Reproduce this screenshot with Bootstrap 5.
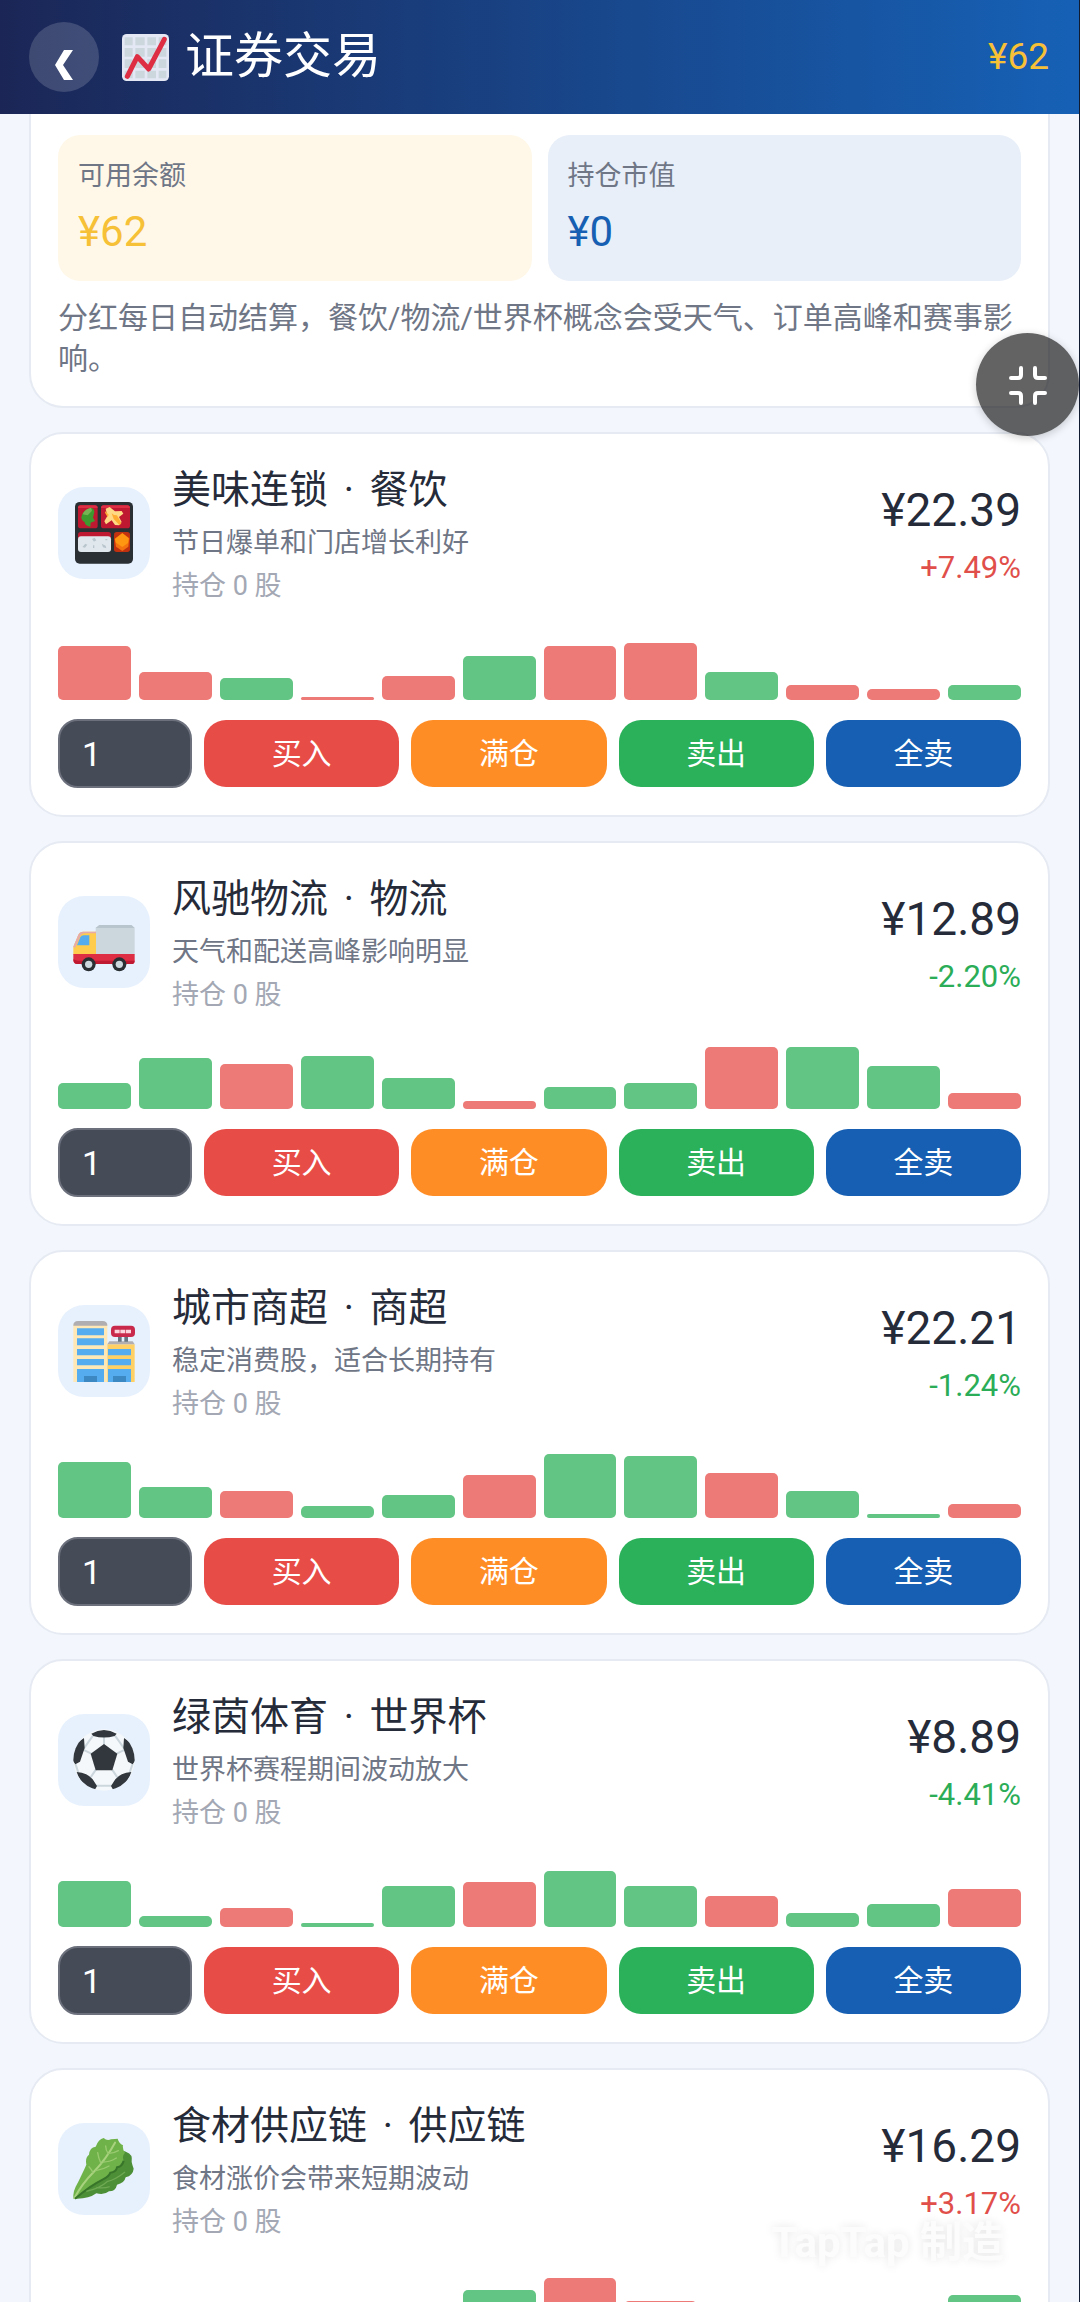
<!DOCTYPE html>
<html lang="zh-CN">

<head>
    <meta charset="UTF-8">
    <meta name="viewport" content="width=device-width, initial-scale=1.0">
    <title>证券交易</title>
    <link href="https://cdn.jsdelivr.net/npm/bootstrap@5.3.0/dist/css/bootstrap.min.css" rel="stylesheet">
    <style>
        body {
            font-family: Roboto, "Noto Sans CJK SC", sans-serif;
            background: #f3f7fd;
            color: #262b3a;
        }

        /* App shell: fixed bar on top, list scrolls under it */
        .app-shell {
            border-right: 1px solid #101a30;
        }

        .app-main {
            padding: 0 29px;
            gap: 24px;
            scrollbar-width: none;
        }

        .app-main::-webkit-scrollbar {
            display: none;
        }

        .top-bar {
            height: 114px;
            padding: 0 30px 0 29px;
            background: linear-gradient(90deg, #1b2656, #1661b6);
        }

        .back-btn {
            width: 70px;
            height: 70px;
            background: rgba(255, 255, 255, .16);
        }

        .page-title {
            font-size: 49px;
            line-height: 64px;
            margin-left: 23px;
            gap: 16px;
        }

        .top-money {
            font-size: 37px;
            color: #f6c037;
        }

        /* Cards */
        .panel {
            background: #fff;
            border: 2px solid #e6eaf2;
            border-radius: 34px;
            padding: 28px 27px 27px;
        }

        .panel-summary {
            border-top: 0;
            border-top-left-radius: 0;
            border-top-right-radius: 0;
            padding: 21px 27px 27px;
        }

        .money-row {
            gap: 16px;
        }

        .money-box {
            border-radius: 22px;
            padding: 18px 20px 16px;
        }

        .money-label {
            font-size: 27px;
            line-height: 46px;
            color: #6f7686;
        }

        .money-value {
            font-size: 42px;
            line-height: 66px;
        }

        .box-cash {
            background: #fff8e9;
            color: #f6c037;
        }

        .box-hold {
            background: #e8eff8;
            color: #165fb3;
        }

        .hint {
            font-size: 30px;
            line-height: 41px;
            margin-top: 16px;
            color: #6f7686;
        }

        /* Stock rows */
        .stock-icon {
            width: 92px;
            height: 92px;
            border-radius: 26px;
            margin-right: 22px;
            background: #e7f1fd;
        }

        .stock-name {
            font-size: 39px;
            line-height: 56px;
        }

        .name-dot {
            margin: 0 6px;
        }

        .stock-desc {
            font-size: 27px;
            line-height: 50px;
            color: #6f7686;
        }

        .stock-hold {
            font-size: 27px;
            line-height: 36px;
            color: #a3a8b4;
        }

        .stock-quote {
            padding-top: 6px;
        }

        .stock-price {
            font-size: 46px;
            line-height: 64px;
        }

        .stock-change {
            font-size: 31px;
            line-height: 52px;
        }

        .up {
            color: #e14f4b;
        }

        .down {
            color: #2bad58;
        }

        .spark {
            height: 78px;
            margin: 18px 0 19px;
            gap: 8px;
        }

        .bar {
            flex: 1 1 0;
            border-radius: 5px;
        }

        .bar-up {
            background: #ed7a77;
        }

        .bar-down {
            background: #62c583;
        }

        /* Trade controls */
        .trade-row {
            gap: 12px;
        }

        .qty {
            width: 134px;
            height: 69px;
            flex: none;
            padding: 0 22px;
            font-size: 34px;
            border: 2px solid #6b707c;
            border-radius: 20px;
            background: #464b58;
            color: #fff;
        }

        .qty:focus {
            background: #464b58;
            color: #fff;
        }

        .trade-btn {
            flex: 1 1 0;
            height: 67px;
            padding: 0;
            border: 0;
            border-radius: 22px;
            font-size: 30px;
            color: #fff;
        }

        .btn-buy {
            background: #e84c47;
        }

        .btn-full {
            background: #ff8d26;
        }

        .btn-sell {
            background: #2bb15a;
        }

        .btn-clear {
            background: #165fb3;
        }

        /* Floating shrink button */
        .shrink-btn {
            position: fixed;
            top: 333px;
            right: 1px;
            width: 103px;
            height: 103px;
            background: rgba(0, 0, 0, .61);
            box-shadow: 0 2px 8px rgba(0, 0, 0, .2);
        }

        .brand-mark {
            position: fixed;
            right: 76px;
            bottom: 38px;
            font-size: 42px;
            line-height: 42px;
            font-weight: 700;
            color: #fcfcfc;
            text-shadow: 0 0 10px rgba(0, 0, 0, .1);
        }
    </style>
    <script src="https://cdn.jsdelivr.net/npm/bootstrap@5.3.0/dist/js/bootstrap.bundle.min.js"></script>
</head>

<body>

    <div class="app-shell vh-100 d-flex flex-column overflow-hidden">

        <header class="top-bar d-flex align-items-center flex-shrink-0">
            <button type="button" class="back-btn btn border-0 rounded-circle p-0 d-flex align-items-center justify-content-center" aria-label="返回">
                <svg width="70" height="70" viewBox="0 0 70 70">
                    <path d="M35 28h9L34 43l10 15h-9L26 43z" fill="#fff" />
                </svg>
            </button>
            <h1 class="page-title d-flex align-items-center fw-normal text-white mb-0">
                <svg width="47" height="47" viewBox="0 0 141 141">
                    <rect width="141" height="141" rx="14" fill="#e3e8f4" />
                    <path d="M8 10h24v24H8zM40 10h28v24H40zM76 10h26v24H76zM110 10h23v24h-23zM8 42h24v26H8zM40 42h28v26H40zM76 42h26v26H76zM110 42h23v26h-23zM8 76h24v26H8zM40 76h28v26H40zM76 76h26v26H76zM110 76h23v26h-23zM8 110h24v23H8zM40 110h28v23H40zM76 110h26v23H76zM110 110h23v23h-23z" fill="#ccd6dd" />
                    <path d="M16 127L46 68l34 37 47-89" fill="none" stroke="#dd2e44" stroke-width="15" stroke-linecap="round" stroke-linejoin="round" />
                </svg>
                <span>证券交易</span>
            </h1>
            <span class="top-money ms-auto">¥62</span>
        </header>

        <main class="app-main d-flex flex-column flex-grow-1 overflow-auto">

            <section class="panel panel-summary flex-shrink-0">
                <div class="money-row d-flex">
                    <div class="money-box box-cash w-50">
                        <div class="money-label">可用余额</div>
                        <div class="money-value">¥62</div>
                    </div>
                    <div class="money-box box-hold w-50">
                        <div class="money-label">持仓市值</div>
                        <div class="money-value">¥0</div>
                    </div>
                </div>
                <p class="hint mb-0">分红每日自动结算，餐饮/物流/世界杯概念会受天气、订单高峰和赛事影响。</p>
            </section>

            <section class="panel flex-shrink-0">
                <div class="d-flex align-items-center">
                    <div class="stock-icon d-flex align-items-center justify-content-center">
                        <!-- Bento box -->
                        <svg width="62" height="62" viewBox="69 64 186 186">
                            <rect x="75" y="64" width="174" height="185" rx="14" fill="#292f33" />
                            <rect x="84" y="74" width="59" height="69" rx="8" fill="#be1931" />
                            <rect x="153" y="74" width="87" height="69" rx="8" fill="#be1931" />
                            <path d="M84 80q0-6 8-6h43q8 0 8 8H84zM153 82q0-8 8-8h71q8 0 8 8z" fill="#dd2e44" />
                            <path d="M94 110q2-20 30-29 9 3 9 13l-4 17 6 10-13 5-1 12q-17-3-17-14-10-4-10-14z" fill="#3e9a2f" />
                            <path d="M98 101q5-15 25-20l3 9-13 14z" fill="#77b255" />
                            <path d="M167 84l12-5 16 13 20-1 5 8-13 10 8 15-8 10-12-1-10-14-17 12-5-9 9-16z" fill="#ffd983" />
                            <path d="M185 98l7 5 9 1 13 24-5 6-18-19zM166 92l10 10-3 8-8-14z" fill="#ffac33" />
                            <path d="M84 162q0-8 8-8h83q8 0 8 8v30H84z" fill="#be1931" />
                            <rect x="84" y="167" width="99" height="47" rx="9" fill="#e1e8ed" />
                            <path d="M97 199l9-10 6 3-7 9zM126 175l8-4 5 8-7 4zM155 189l12 6 2 8-10-3zM129 194h4v8h-4zM166 175h6v4h-6z" fill="#b9c6cd" />
                            <rect x="192" y="154" width="48" height="60" rx="8" fill="#c1300f" />
                            <path d="M217 157l21 16-3 25-18 13-19-13-4-24z" fill="#f4710f" />
                            <path d="M217 158l19 15-2 14-17 12-19-13-3-11z" fill="#ff9611" />
                        </svg>
                    </div>
                    <div class="flex-grow-1">
                        <h2 class="stock-name fw-normal mb-0">美味连锁 <span class="name-dot">·</span> 餐饮</h2>
                        <div class="stock-desc">节日爆单和门店增长利好</div>
                        <div class="stock-hold">持仓 0 股</div>
                    </div>
                    <div class="stock-quote text-end">
                        <div class="stock-price">¥22.39</div>
                        <div class="stock-change up">+7.49%</div>
                    </div>
                </div>
                <div class="spark d-flex align-items-end" data-bars="54 28 -22 3 24 -44 54 57 -28 15 11 -15"></div>
                <div class="trade-row d-flex align-items-center">
                    <input type="text" inputmode="numeric" class="qty form-control" value="1" aria-label="数量">
                    <button type="button" class="trade-btn btn-buy btn">买入</button>
                    <button type="button" class="trade-btn btn-full btn">满仓</button>
                    <button type="button" class="trade-btn btn-sell btn">卖出</button>
                    <button type="button" class="trade-btn btn-clear btn">全卖</button>
                </div>
            </section>

            <section class="panel flex-shrink-0">
                <div class="d-flex align-items-center">
                    <div class="stock-icon d-flex align-items-center justify-content-center">
                        <!-- Truck -->
                        <svg width="62" height="62" viewBox="69 61 186 186">
                            <path d="M137 112l11-9h96l10 9v80H137z" fill="#ccd6dd" />
                            <path d="M148 103h96l10 9H137z" fill="#b8c5cd" />
                            <path d="M70 192v-24l15-36q4-9 15-9h38v69z" fill="#ffcc4d" />
                            <path d="M70 168l15-36q4-9 15-9h38v5h-35q-8 0-11 6l-17 38z" fill="#e6aaaa" />
                            <path d="M81 164l10-24q3-6 10-6h17v30z" fill="#55acee" />
                            <path d="M70 190h184v20q0 10-10 10H82q-12 0-12-12z" fill="#dd2e44" />
                            <path d="M70 206q0 14 12 14h162q10 0 10-10H82z" fill="#be1931" />
                            <circle cx="116" cy="221" r="21" fill="#292f33" />
                            <circle cx="208" cy="221" r="21" fill="#292f33" />
                            <circle cx="116" cy="221" r="11" fill="#ccd6dd" />
                            <circle cx="208" cy="221" r="11" fill="#ccd6dd" />
                        </svg>
                    </div>
                    <div class="flex-grow-1">
                        <h2 class="stock-name fw-normal mb-0">风驰物流 <span class="name-dot">·</span> 物流</h2>
                        <div class="stock-desc">天气和配送高峰影响明显</div>
                        <div class="stock-hold">持仓 0 股</div>
                    </div>
                    <div class="stock-quote text-end">
                        <div class="stock-price">¥12.89</div>
                        <div class="stock-change down">-2.20%</div>
                    </div>
                </div>
                <div class="spark d-flex align-items-end" data-bars="-26 -51 45 -53 -31 8 -22 -26 62 -62 -43 16"></div>
                <div class="trade-row d-flex align-items-center">
                    <input type="text" inputmode="numeric" class="qty form-control" value="1" aria-label="数量">
                    <button type="button" class="trade-btn btn-buy btn">买入</button>
                    <button type="button" class="trade-btn btn-full btn">满仓</button>
                    <button type="button" class="trade-btn btn-sell btn">卖出</button>
                    <button type="button" class="trade-btn btn-clear btn">全卖</button>
                </div>
            </section>

            <section class="panel flex-shrink-0">
                <div class="d-flex align-items-center">
                    <div class="stock-icon d-flex align-items-center justify-content-center">
                        <!-- Store building -->
                        <svg width="62" height="62" viewBox="69 59 186 186">
                            <path d="M70 72h102v174H70z" fill="#ffe8b6" />
                            <path d="M70 76q0-14 14-14h74q14 0 14 14z" fill="#b0aeb0" />
                            <path d="M81 84h81v21H81zM81 114h81v21H81zM81 146h81v19H81zM81 176h81v19H81zM81 206h81v40H81z" fill="#55acee" />
                            <path d="M102 227h39v19h-39z" fill="#3b88c3" />
                            <path d="M172 132h82v114h-82z" fill="#ffd164" />
                            <path d="M172 132l6-9h70l6 9z" fill="#b0aeb0" />
                            <path d="M174 146h69v19h-69zM174 176h69v19h-69zM174 206h69v40h-69z" fill="#55acee" />
                            <path d="M189 227h39v19h-39z" fill="#3b88c3" />
                            <path d="M204 106h11v18h-11zM223 106h11v18h-11z" fill="#66757f" />
                            <rect x="183" y="76" width="72" height="34" rx="12" fill="#c92a4b" />
                            <path d="M194 88h15v11h-15zM211 88h15v11h-15zM228 88h15v11h-15z" fill="#fbd3db" />
                        </svg>
                    </div>
                    <div class="flex-grow-1">
                        <h2 class="stock-name fw-normal mb-0">城市商超 <span class="name-dot">·</span> 商超</h2>
                        <div class="stock-desc">稳定消费股，适合长期持有</div>
                        <div class="stock-hold">持仓 0 股</div>
                    </div>
                    <div class="stock-quote text-end">
                        <div class="stock-price">¥22.21</div>
                        <div class="stock-change down">-1.24%</div>
                    </div>
                </div>
                <div class="spark d-flex align-items-end" data-bars="-56 -31 27 -12 -23 43 -64 -62 45 -27 -4 14"></div>
                <div class="trade-row d-flex align-items-center">
                    <input type="text" inputmode="numeric" class="qty form-control" value="1" aria-label="数量">
                    <button type="button" class="trade-btn btn-buy btn">买入</button>
                    <button type="button" class="trade-btn btn-full btn">满仓</button>
                    <button type="button" class="trade-btn btn-sell btn">卖出</button>
                    <button type="button" class="trade-btn btn-clear btn">全卖</button>
                </div>
            </section>

            <section class="panel flex-shrink-0">
                <div class="d-flex align-items-center">
                    <div class="stock-icon d-flex align-items-center justify-content-center">
                        <!-- Football -->
                        <svg width="62" height="62" viewBox="69 74 186 186">
                            <clipPath id="ballClip">
                                <circle cx="162" cy="167" r="92" />
                            </clipPath>
                            <circle cx="162" cy="167" r="92" fill="#f5f8fa" />
                            <g clip-path="url(#ballClip)">
                                <path d="M162 94v28M124 148l-25-12M200 148l25-12M138 195l-16 24M186 195l16 24M99 136l30-42M225 136l-30-42M76 178l9 27M248 178l-9 27M138 244h48" fill="none" stroke="#ccd6dd" stroke-width="6" />
                                <path d="M162 119l40 29-15 50h-50l-15-50z" fill="#31373d" />
                                <path d="M124 88q38-22 76 0l-6 7q-32 9-64 0zM66 166l8-45 28-20 2 30-14 41-14 8zM258 166l-8-45-28-20-2 30 14 41 14 8zM80 203q33 3 48 22l13 20-8 14q-40-15-53-56zM244 203q-33 3-48 22l-13 20 8 14q40-15 53-56z" fill="#31373d" />
                            </g>
                        </svg>
                    </div>
                    <div class="flex-grow-1">
                        <h2 class="stock-name fw-normal mb-0">绿茵体育 <span class="name-dot">·</span> 世界杯</h2>
                        <div class="stock-desc">世界杯赛程期间波动放大</div>
                        <div class="stock-hold">持仓 0 股</div>
                    </div>
                    <div class="stock-quote text-end">
                        <div class="stock-price">¥8.89</div>
                        <div class="stock-change down">-4.41%</div>
                    </div>
                </div>
                <div class="spark d-flex align-items-end" data-bars="-46 -11 19 -4 -41 45 -56 -41 31 -14 -23 38"></div>
                <div class="trade-row d-flex align-items-center">
                    <input type="text" inputmode="numeric" class="qty form-control" value="1" aria-label="数量">
                    <button type="button" class="trade-btn btn-buy btn">买入</button>
                    <button type="button" class="trade-btn btn-full btn">满仓</button>
                    <button type="button" class="trade-btn btn-sell btn">卖出</button>
                    <button type="button" class="trade-btn btn-clear btn">全卖</button>
                </div>
            </section>

            <section class="panel flex-shrink-0">
                <div class="d-flex align-items-center">
                    <div class="stock-icon d-flex align-items-center justify-content-center">
                        <!-- Leafy green -->
                        <svg width="62" height="62" viewBox="0 0 186 186">
                            <path d="M4 182q42 2 66-16 24 6 38-6 20 0 24-20 22-4 26-22 22-6 24-26-4-10-6-20 4-24-16-30-10-6-18 0z" fill="#4d8f36" />
                            <path d="M2 182Q-2 166 8 146q8-14 18-36 8-16 14-30-4-22 8-30 2-22 20-24Q76 4 92 0q10 10 22 4 14-2 20-2 4 14 16 20-2 12 6 22-10 10-4 24-12 8-12 20-16 4-18 16-16 2-22 14-12 6-30 14-22 12-38 26-12 14-20 24z" fill="#6fb24a" />
                            <path d="M4 180q24-44 58-78 38-40 64-88" fill="none" stroke="#a9d27e" stroke-width="6" stroke-linecap="round" />
                            <path d="M60 104q-6-12-12-18M84 76q-8-16-10-32M106 48q-8-12-8-24M68 98q24-4 40-14M90 72q22 0 40-12M108 46q14 0 28-8" fill="none" stroke="#9aca70" stroke-width="4" stroke-linecap="round" />
                            <path d="M6 182q42-36 84-58 18-8 22-20 18-2 20-16 16-2 20-20" fill="none" stroke="#38752a" stroke-width="6" />
                            <path d="M40 160q40-8 64-30 22-4 52-28M70 148q22 4 40-2" fill="none" stroke="#6fa953" stroke-width="4" />
                        </svg>
                    </div>
                    <div class="flex-grow-1">
                        <h2 class="stock-name fw-normal mb-0">食材供应链 <span class="name-dot">·</span> 供应链</h2>
                        <div class="stock-desc">食材涨价会带来短期波动</div>
                        <div class="stock-hold">持仓 0 股</div>
                    </div>
                    <div class="stock-quote text-end">
                        <div class="stock-price">¥16.29</div>
                        <div class="stock-change up">+3.17%</div>
                    </div>
                </div>
                <div class="spark d-flex align-items-end" data-bars="-20 24 -12 8 -28 -46 58 35 -22 16 -30 -41"></div>
            </section>

        </main>
    </div>

    <button type="button" class="shrink-btn btn border-0 rounded-circle p-0 d-flex align-items-center justify-content-center" aria-label="退出全屏">
        <svg width="40" height="40" viewBox="0 0 40 40" fill="none" stroke="#fff" stroke-width="4" stroke-linecap="round">
            <path d="M3 13h7q3 0 3-3V3M27 3v7q0 3 3 3h7M3 28h7q3 0 3 3v7M27 38v-7q0-3 3-3h7" />
        </svg>
    </button>

    <div class="brand-mark">TapTap 制造</div>

    <script>
        // Positive values are up days (red), negative values are down days (green)
        document.querySelectorAll(".spark").forEach(function (chart) {
            chart.dataset.bars.split(" ").forEach(function (value) {
                const bar = document.createElement("div");
                bar.className = "bar " + (value > 0 ? "bar-up" : "bar-down");
                bar.style.height = Math.abs(value) + "px";
                chart.appendChild(bar);
            });
        });
    </script>

</body>

</html>
